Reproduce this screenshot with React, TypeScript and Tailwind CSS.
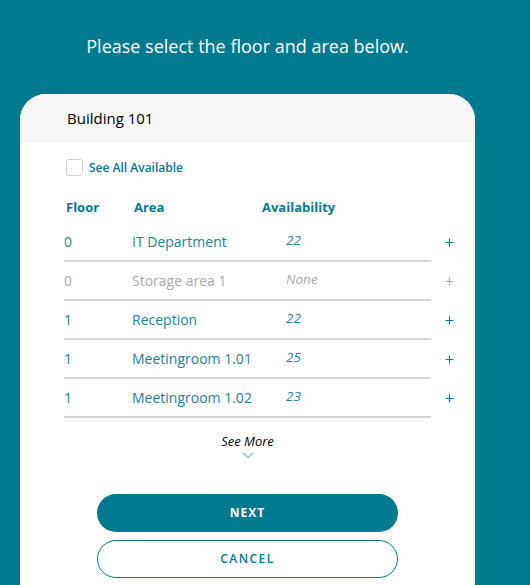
import React from "react";

const rows = [
  { floor: "0", area: "IT Department", avail: "22", disabled: false },
  { floor: "0", area: "Storage area 1", avail: "None", disabled: true },
  { floor: "1", area: "Reception", avail: "22", disabled: false },
  { floor: "1", area: "Meetingroom 1.01", avail: "25", disabled: false },
  { floor: "1", area: "Meetingroom 1.02", avail: "23", disabled: false },
];

function Plus({ color }: { color: string }) {
  return (
    <svg width="9" height="9" viewBox="0 0 9 9">
      <path d="M4.5 0.5 V8.5 M0.5 4.5 H8.5" stroke={color} strokeWidth="1.2" fill="none" />
    </svg>
  );
}

export default function App() {
  return (
    <div
      className="w-[530px] h-[585px] overflow-hidden bg-[#01798e]"
      style={{ fontFamily: '"Open Sans", "Noto Sans", sans-serif' }}
    >
      <div className="w-[455px] ml-[20px]">
        <div className="pt-[33px] h-[94px] text-center text-white text-[18px] leading-[26px]">
          Please select the floor and area below.
        </div>
        <div className="bg-white rounded-t-[26px] overflow-hidden h-[491px]">
          <div className="h-[49px] bg-[#f6f6f6] pl-[47px] flex items-center text-[15px] text-black">
            Building 101
          </div>
          <div className="pl-[44px] pr-[20px]">
            <div className="mt-[16px] flex items-center h-[17px] pl-[2px]">
              <div className="w-[17px] h-[17px] border border-[#cfcfcf] rounded-[3px]" />
              <span className="ml-[6px] text-[12px] font-semibold text-[#01798e]">See All Available</span>
            </div>
            <div className="mt-[17px] h-[30px] flex items-center text-[13px] font-bold text-[#01798e]">
              <span className="w-[70px] pl-[2px]">Floor</span>
              <span className="w-[128px]">Area</span>
              <span>Availability</span>
            </div>
            {rows.map((r, i) => (
              <div key={i} className="flex items-center">
                <div className="w-[367px] h-[39px] border-b-2 border-[#d4d4d4] flex items-center text-[14px]">
                  <span className={`w-[68px] ${r.disabled ? "text-[#a9a9a9]" : "text-[#1f7f93]"}`}>{r.floor}</span>
                  <span className={`w-[154px] ${r.disabled ? "text-[#a9a9a9]" : "text-[#1f7f93]"}`}>{r.area}</span>
                  <span className={`italic text-[13.5px] -mt-[3px] ${r.disabled ? "text-[#a9a9a9]" : "text-[#1f7f93]"}`}>{r.avail}</span>
                </div>
                <span className="ml-[14px] -mt-[1px] flex">
                  <Plus color={r.disabled ? "#b9a59a" : "#01798e"} />
                </span>
              </div>
            ))}
            <div className="w-[367px] flex flex-col items-center mt-[14px]">
              <span className="italic text-[13px] text-black leading-[18px]">See More</span>
              <svg width="12" height="7" viewBox="0 0 12 7" className="mt-[2px]">
                <path d="M1 1 L6 5.5 L11 1" fill="none" stroke="#7cc3d3" strokeWidth="1.2" />
              </svg>
            </div>
            <div className="w-[367px] flex flex-col items-center mt-[35px] gap-[8px]">
              <button className="w-[301px] h-[38px] rounded-full bg-[#01798e] text-white text-[12px] font-bold tracking-[0.08em]">
                NEXT
              </button>
              <button className="w-[301px] h-[38px] rounded-full border border-[#01798e] bg-white text-[#01798e] text-[12px] font-semibold tracking-[0.12em]">
                CANCEL
              </button>
            </div>
          </div>
        </div>
      </div>
    </div>
  );
}
